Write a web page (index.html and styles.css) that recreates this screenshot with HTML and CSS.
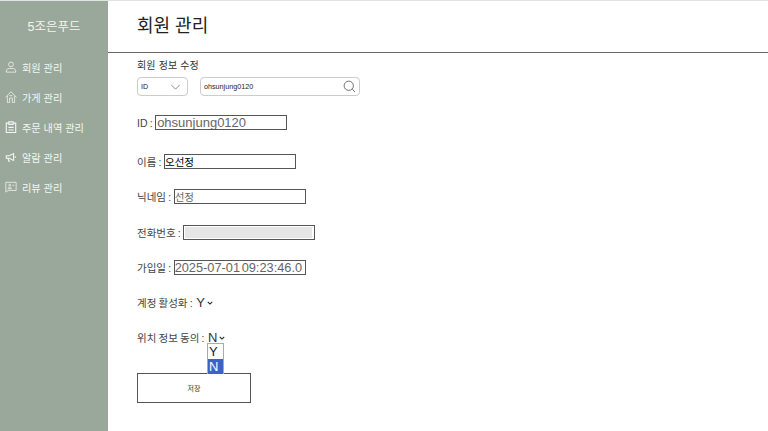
FILE: index.html
```html
<!DOCTYPE html>
<html lang="ko">
<head>
    <meta charset="UTF-8">
    <meta name="viewport" content="width=device-width, initial-scale=1.0">
    <title>회원 관리</title>
    <link rel="stylesheet" href="styles.css">
</head>
<body>
    <aside class="sidebar">
        <div class="logo">5조은푸드</div>
        <ul class="menu">
            <li class="menu-item">
                <svg class="menu-icon" viewBox="0 0 14 14"><circle cx="7" cy="4" r="2.8"/><path d="M1.500 13v-1.500c0-1.600 1.600-2.700 3.400-2.700h4.200c1.800 0 3.400 1.100 3.400 2.700V13z"/></svg>
                회원 관리
            </li>
            <li class="menu-item">
                <svg class="menu-icon" viewBox="0 0 14 14"><path d="M.5 7.500 7 .8l6.500 6.700M2.800 5.800v7.900h2.600V8.200h3.200v5.500h2.600V5.800M5 5.500h4"/></svg>
                가게 관리
            </li>
            <li class="menu-item">
                <svg class="menu-icon heavy" viewBox="0 0 14 14"><path d="M4.500 2.500H1.500v11h11v-11H9.500"/><path d="M4.500 1h5v3h-5zM4 7.500h6M4 10.500h6"/></svg>
                주문 내역 관리
            </li>
            <li class="menu-item">
                <svg class="menu-icon heavy" viewBox="0 0 14 14"><path d="M1.500 5.500h3.500L10 3v8L5 8.500H1.500zM3.500 8.500l1 3.500h1.500M12 6v2"/></svg>
                알람 관리
            </li>
            <li class="menu-item">
                <svg class="menu-icon" viewBox="0 0 14 14"><path d="M1 1.500h12v9.500H3.500L1 13z"/><path d="M3.500 9c.5-1.500 1.200-2 2-2s1.500.5 2 2zM8.500 5h2.500"/><circle cx="5.500" cy="4.800" r="1.100"/></svg>
                리뷰 관리
            </li>
        </ul>
    </aside>

    <main class="content">
        <h1 class="page-title">회원 관리</h1>

        <div class="content-body">
            <div class="section-title">회원 정보 수정</div>

            <div class="search-row">
                <div class="search-type">
                    <span>ID</span>
                    <svg class="chevron" viewBox="0 0 12 7"><path d="M1 1l5 5 5-5"/></svg>
                </div>
                <div class="search-box">
                    <span>ohsunjung0120</span>
                    <svg class="search-icon" viewBox="0 0 14 14"><circle cx="6.200" cy="6.200" r="5"/><path d="M10 10l3 3"/></svg>
                </div>
            </div>

            <form class="member-form">
                <div class="field field-id">
                    <label>ID :</label>
                    <input class="text-input muted" type="text" value="ohsunjung0120">
                </div>
                <div class="field">
                    <label>이름 :</label>
                    <input class="text-input ko" type="text" value="오선정">
                </div>
                <div class="field">
                    <label>닉네임 :</label>
                    <input class="text-input muted ko" type="text" value="선정">
                </div>
                <div class="field">
                    <label>전화번호 :</label>
                    <div class="phone-input"><span class="phone-fill"></span></div>
                </div>
                <div class="field">
                    <label>가입일 :</label>
                    <input class="text-input muted date" type="text" value="2025-07-01 09:23:46.0">
                </div>
                <div class="field">
                    <label>계정 활성화 :</label>
                    <span class="select-value">Y<svg class="select-arrow" viewBox="0 0 8 5"><path d="M1 1l3 3 3-3"/></svg></span>
                </div>
                <div class="field field-open">
                    <label>위치 정보 동의 :</label>
                    <span class="select-value">N<svg class="select-arrow" viewBox="0 0 8 5"><path d="M1 1l3 3 3-3"/></svg>
                        <span class="dropdown">
                            <span class="dropdown-option">Y</span>
                            <span class="dropdown-option selected">N</span>
                        </span>
                    </span>
                </div>
                <button class="save-btn" type="button">저장</button>
            </form>
        </div>
    </main>
</body>
</html>
```

FILE: styles.css
```css
* {
    margin: 0;
    padding: 0;
    box-sizing: border-box;
    font-family: "Liberation Sans", "Noto Sans CJK KR", sans-serif;
}

html, body {
    height: 100%;
    overflow: hidden;
}

body {
    display: flex;
    background: #fff;
    color: #333;
    border-top: 1px solid #e3e3e3;
}

.sidebar {
    width: 108px;
    background: #9aa79b;
    color: #f4f6f4;
    flex-shrink: 0;
}

.logo {
    height: 51px;
    line-height: 53px;
    text-align: center;
    font-size: 12.500px;
}

.menu {
    list-style: none;
}

.menu-item {
    display: flex;
    align-items: center;
    height: 30px;
    padding-left: 5px;
    font-size: 10.200px;
    gap: 5px;
    white-space: nowrap;
}

.menu-icon {
    width: 12px;
    height: 12px;
    fill: none;
    stroke: #f4f6f4;
    stroke-width: 0.9;
    flex-shrink: 0;
}

.menu-icon.heavy {
    stroke-width: 1.300;
}

.content {
    flex: 1;
}

.page-title {
    height: 52px;
    line-height: 51px;
    padding-left: 29px;
    font-size: 18px;
    font-weight: 400;
    color: #222;
    border-bottom: 1px solid #666;
}

.content-body {
    padding: 6px 0 0 29px;
}

.section-title {
    font-size: 10px;
    line-height: 14px;
    word-spacing: 0.5px;
}

.search-row {
    display: flex;
    gap: 12px;
    margin-top: 4px;
}

.search-type,
.search-box {
    display: flex;
    align-items: center;
    justify-content: space-between;
    height: 19px;
    border: 1px solid #ccc;
    border-radius: 4px;
    font-size: 7.200px;
    color: #222;
    padding: 0 3px;
}

.search-type {
    width: 51px;
}

.search-box {
    width: 160px;
}

.chevron {
    width: 11px;
    height: 6px;
    margin-right: 3px;
    fill: none;
    stroke: #777;
    stroke-width: 1;
}

.search-icon {
    width: 13px;
    height: 13px;
    fill: none;
    stroke: #666;
    stroke-width: 1;
}

.member-form {
    margin-top: 19px;
}

.field {
    display: flex;
    align-items: center;
    gap: 2.500px;
    height: 15px;
    margin-bottom: 20.300px;
    font-size: 10.500px;
    color: #444;
    word-spacing: -0.7px;
}

.field-id {
    margin-bottom: 24px;
}

.text-input {
    width: 132px;
    height: 15px;
    border: 1px solid #555;
    padding: 0 1px;
    font-size: 13px;
    color: #000;
    outline: none;
    background: #fff;
}

.text-input.muted {
    color: #666;
}

.text-input.ko {
    font-size: 10.500px;
    padding: 0;
}

.text-input.date {
    font-size: 12.800px;
    padding: 0;
    word-spacing: -2px;
}

.phone-input {
    width: 132px;
    height: 15px;
    border: 1px solid #555;
    padding: 1px 2px 1px 1px;
    background: #fff;
}

.phone-fill {
    display: block;
    height: 100%;
    background: #e6e6e6;
}

.select-value {
    position: relative;
    display: inline-flex;
    align-items: center;
    gap: 2px;
    margin-left: 1px;
    font-size: 13px;
    color: #333;
}

.select-arrow {
    width: 6px;
    height: 4px;
    fill: none;
    stroke: #222;
    stroke-width: 1.400;
}

.dropdown {
    position: absolute;
    left: -1px;
    top: 13px;
    width: 17px;
    display: flex;
    flex-direction: column;
    border: 1px solid #aaa;
    border-bottom: 0;
    background: #fff;
}

.dropdown-option {
    height: 15px;
    line-height: 15px;
    padding-left: 1px;
    font-size: 13px;
    color: #222;
}

.dropdown-option.selected {
    background: #3d62c4;
    color: #fff;
}

.save-btn {
    display: block;
    width: 114px;
    height: 30px;
    margin-top: 28px;
    border: 1px solid #555;
    background: #fff;
    font-size: 7px;
    color: #333;
}
```
